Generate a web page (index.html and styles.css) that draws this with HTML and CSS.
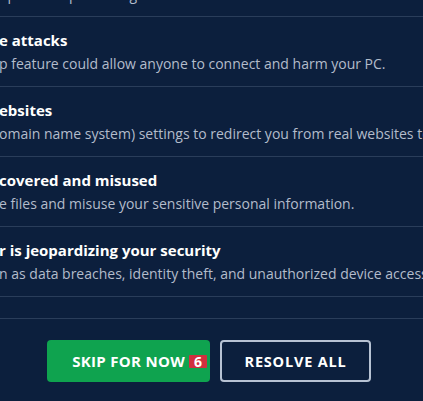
FILE: index.html
```html
<!DOCTYPE html>
<html lang="en">
<head>
  <meta charset="UTF-8">
  <title>Scan results</title>
  <meta name="viewport" content="width=device-width, initial-scale=1.0">
  <link rel="stylesheet" href="styles.css">
</head>
<body>
  <div class="panel">
    <ul class="issues">
      <li class="issue issue-cut">
        <p class="issue-desc">up hidden port to log in</p>
      </li>
      <li class="issue">
        <h3 class="issue-title">e attacks</h3>
        <p class="issue-desc">p feature could allow anyone to connect and harm your PC.</p>
      </li>
      <li class="issue">
        <h3 class="issue-title">ebsites</h3>
        <p class="issue-desc">omain name system) settings to redirect you from real websites to</p>
      </li>
      <li class="issue">
        <h3 class="issue-title">covered and misused</h3>
        <p class="issue-desc">e files and misuse your sensitive personal information.</p>
      </li>
      <li class="issue">
        <h3 class="issue-title">r is jeopardizing your security</h3>
        <p class="issue-desc">n as data breaches, identity theft, and unauthorized device access</p>
      </li>
    </ul>

    <div class="actions">
      <button class="btn btn-skip">SKIP FOR NOW <span class="badge">6</span></button>
      <button class="btn btn-resolve">RESOLVE ALL</button>
    </div>
  </div>
</body>
</html>
```

FILE: styles.css
```css
:root {
  --bg: #0c1f3d;
  --line: #2a3d5a;
  --text: #ffffff;
  --muted: #b3bccb;
  --green: #0fa34f;
  --red: #d0303f;
}

html, body {
  margin: 0;
  height: 100%;
  overflow: hidden;
}

body {
  background: var(--bg);
  color: var(--text);
  font-family: 'Open Sans', Lato, sans-serif;
}

.panel {
  width: 423px;
}

.issues {
  list-style: none;
  margin: -14px 0 0 0;
  padding: 0;
}

.issue {
  padding: 13px 0 13px 0;
  border-bottom: 1px solid var(--line);
  white-space: nowrap;
  overflow: hidden;
}

.issue-cut {
  padding: 0 0 12px 0;
}

.issue-title {
  margin: 0 0 0 -1px;
  font-size: 15px;
  font-weight: 700;
  line-height: 20px;
}

.issue-desc {
  margin: 5px 0 0 -1px;
  font-size: 14px;
  line-height: 18px;
  color: var(--muted);
}

.issue-cut .issue-desc {
  margin-top: 0;
}

.actions {
  margin-top: 21px;
  border-top: 1px solid var(--line);
  padding: 21px 0 0 47px;
  display: flex;
  gap: 10px;
}

.btn {
  height: 42px;
  border-radius: 4px;
  font-family: 'Open Sans', Lato, sans-serif;
  font-size: 14.5px;
  font-weight: 700;
  color: #fff;
  cursor: pointer;
  display: flex;
  align-items: center;
}

.btn-skip {
  width: 163px;
  background: var(--green);
  border: none;
  padding: 0 3px 0 0;
  justify-content: flex-end;
  gap: 4px;
  font-size: 15px;
  letter-spacing: 0.3px;
}

.btn-resolve {
  width: 151px;
  background: transparent;
  border: 2px solid #b7c2d3;
  justify-content: center;
  letter-spacing: 0.8px;
}

.badge {
  background: var(--red);
  font-size: 14px;
  line-height: 13px;
  padding: 0 5px;
  border-radius: 1px;
  letter-spacing: 0;
}
```
